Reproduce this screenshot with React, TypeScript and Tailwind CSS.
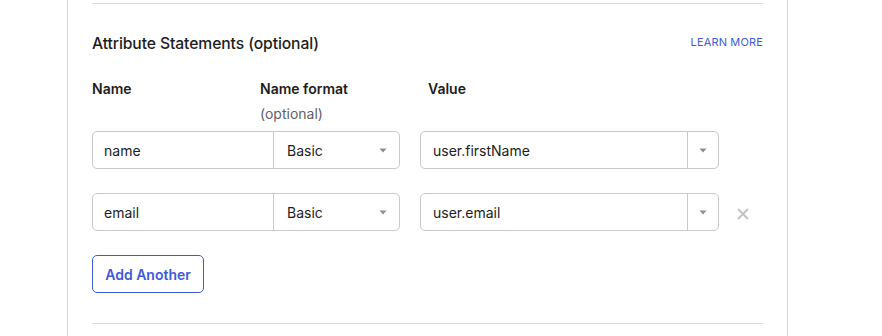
import React from 'react';

const Caret: React.FC = () => (
  <svg width="8" height="5" viewBox="0 0 8 5" className="shrink-0">
    <path d="M0.5 0.5 L7.5 0.5 L4 4.5 Z" fill="#8c8c96" />
  </svg>
);

const rows = [
  { name: 'name', format: 'Basic', value: 'user.firstName', removable: false },
  { name: 'email', format: 'Basic', value: 'user.email', removable: true },
];

const App: React.FC = () => {
  return (
    <div
      className="w-[882px] h-[336px] bg-white overflow-hidden pl-[67px] text-[#1d1d21]"
      style={{ fontFamily: 'Inter, "Noto Sans", sans-serif' }}
    >
      <div className="w-[721px] h-full border-x border-[#d4d4d8] px-[24px] pt-[3px]">
        <div className="border-t border-[#dcdce0] pt-[30px]">
          <div className="flex items-start justify-between h-[20px]">
            <h2 className="text-[15.7px] leading-[20px] font-medium tracking-[-0.1px]">
              Attribute Statements (optional)
            </h2>
            <a className="text-[11px] leading-[14px] mt-[1px] text-[#4059d9] tracking-[0.15px]">LEARN MORE</a>
          </div>

          <div className="grid grid-cols-[168px_168px_168px] mt-[25px] text-[14px] leading-[20px] font-semibold">
            <div>Name</div>
            <div>
              Name format
              <div className="font-normal text-[#5f5f68] mt-[5px]">(optional)</div>
            </div>
            <div>Value</div>
          </div>

          <div className="flex flex-col gap-[24px] mt-[7px]">
            {rows.map((r) => (
              <div key={r.name} className="flex items-center text-[14px]">
                <div className="w-[182px] h-[38px] border border-[#c8c8ce] rounded-l-[5px] flex items-center pl-[11px]">
                  {r.name}
                </div>
                <div className="w-[127px] h-[38px] -ml-px border border-[#c8c8ce] rounded-r-[5px] flex items-center justify-between pl-[13px] pr-[12px]">
                  <span>{r.format}</span>
                  <Caret />
                </div>
                <div className="w-[299px] h-[38px] ml-[20px] border border-[#c8c8ce] rounded-[5px] flex items-center">
                  <span className="flex-1 pl-[12px]">{r.value}</span>
                  <div className="w-[31px] h-full border-l border-[#c8c8ce] flex items-center justify-center">
                    <Caret />
                  </div>
                </div>
                {r.removable && (
                  <svg width="12" height="12" viewBox="0 0 12 12" className="ml-[18px] mt-[3px]">
                    <path d="M1 1 L11 11 M11 1 L1 11" stroke="#c4c4c8" strokeWidth="2" />
                  </svg>
                )}
              </div>
            ))}
          </div>

          <button className="mt-[24px] h-[38px] w-[112px] border border-[#4059d9] rounded-[5px] text-[#4059d9] text-[14px] font-semibold">
            Add Another
          </button>

          <div className="mt-[30px] border-t border-[#dcdce0]" />
        </div>
      </div>
    </div>
  );
};

export default App;
